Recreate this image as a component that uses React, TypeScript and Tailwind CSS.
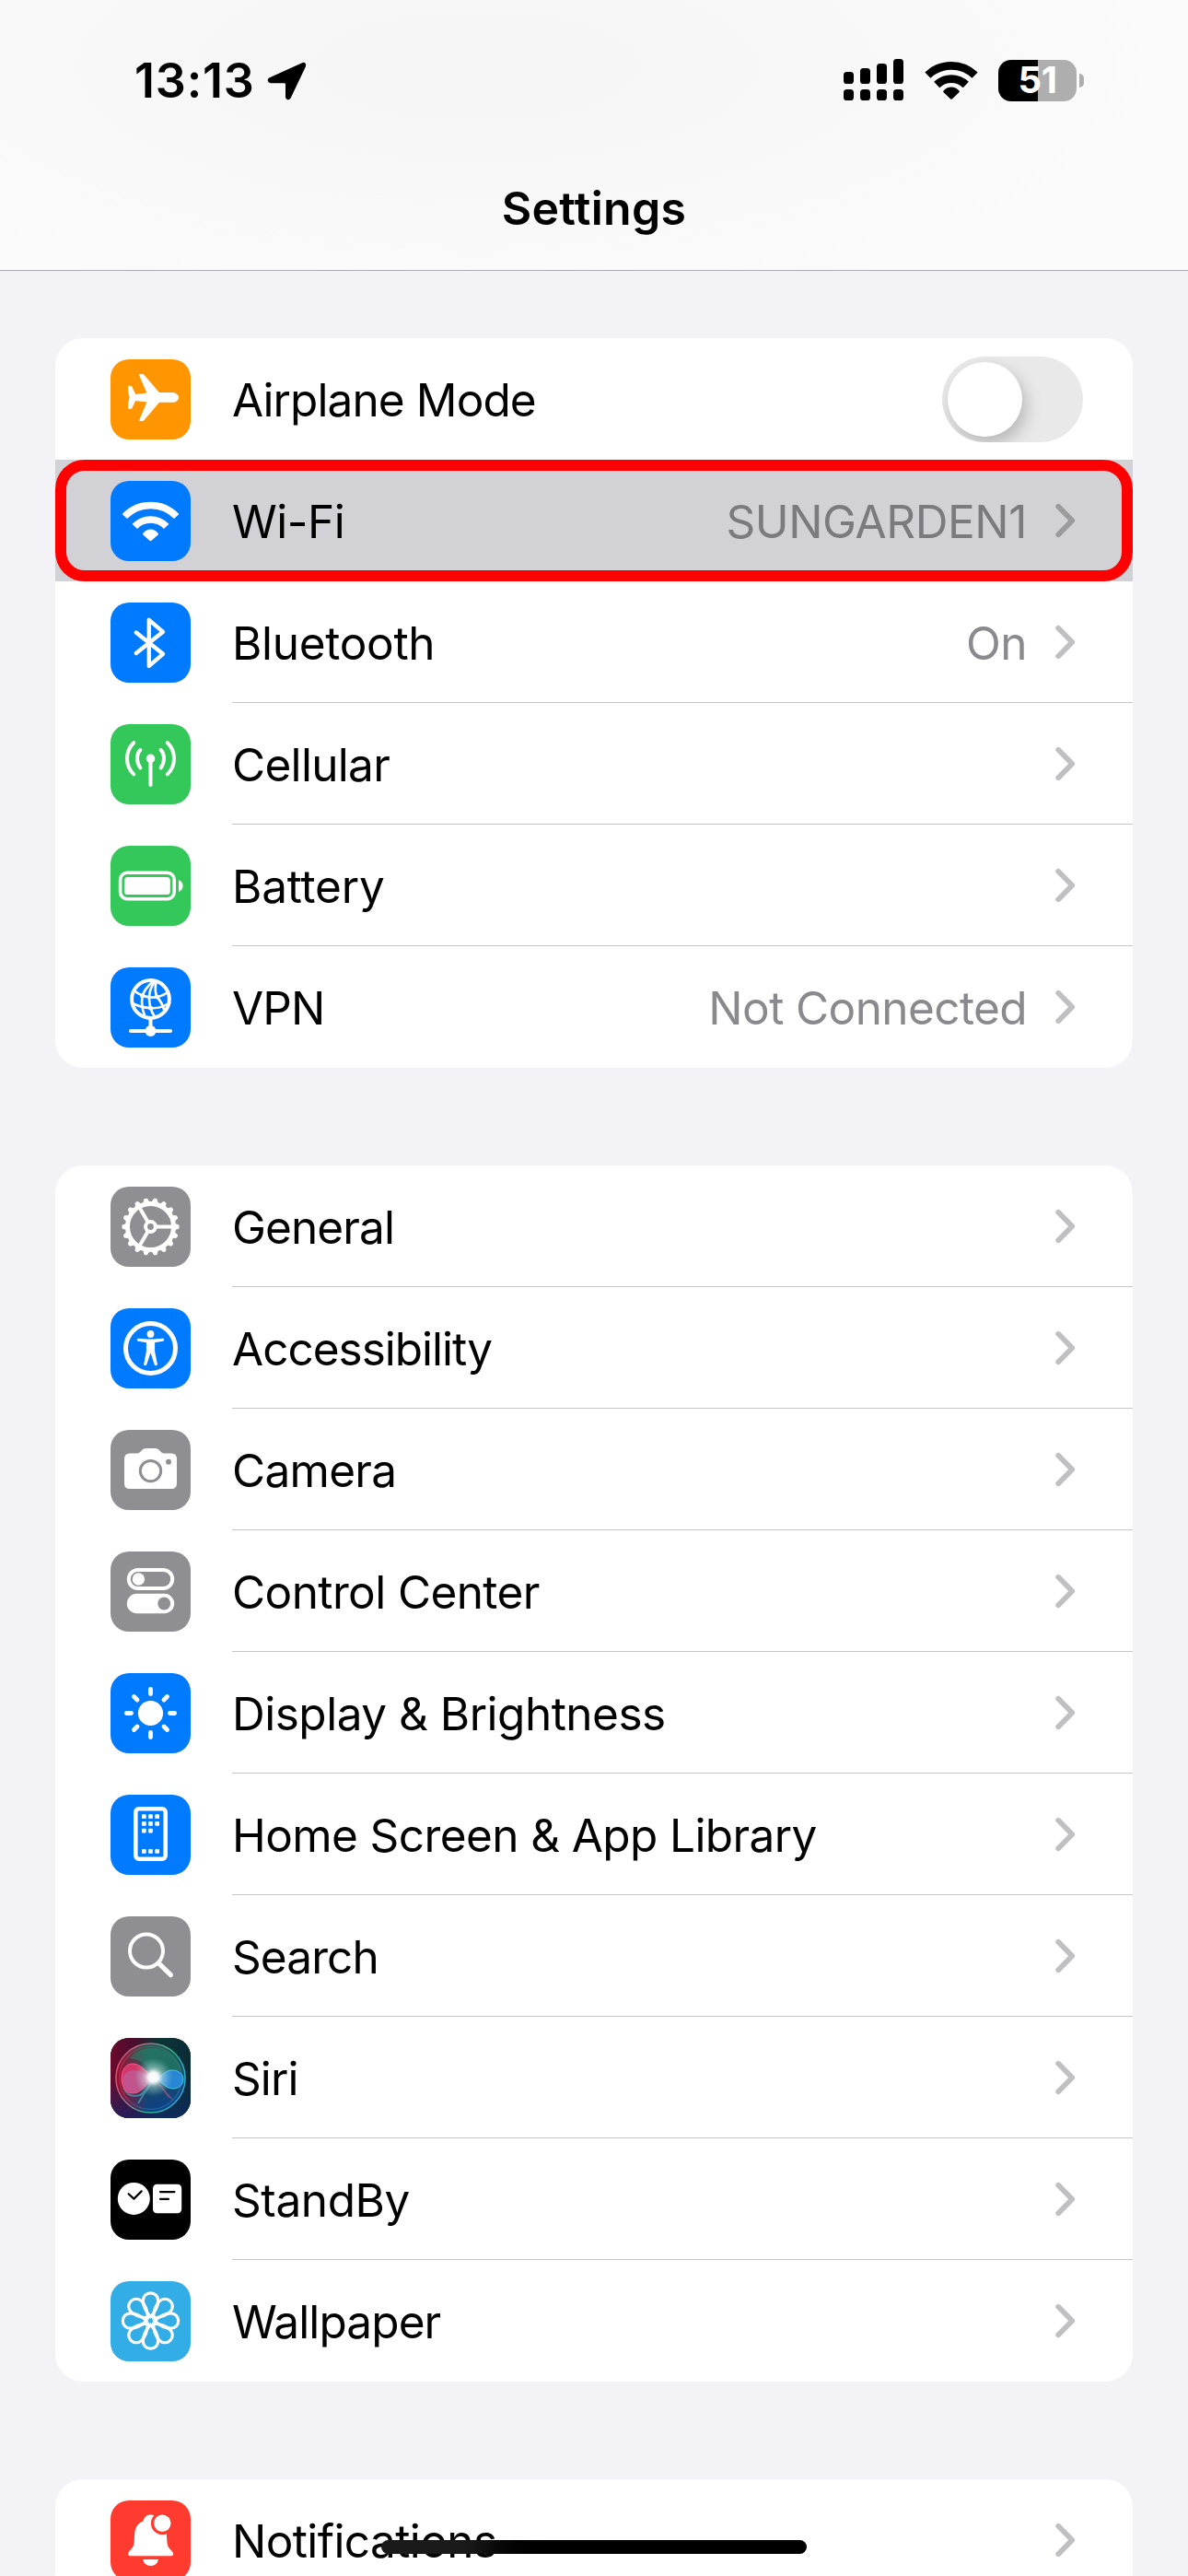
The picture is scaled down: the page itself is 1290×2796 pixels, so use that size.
import React from "react";

type Row = {
  label: string;
  color: string;
  icon: React.ReactNode;
  tracking?: string;
  value?: string;
  toggle?: boolean;
  active?: boolean;
};

const range = (n: number) => Array.from({ length: n }, (_, i) => i);

function Airplane() {
  return (
    <path
      fill="#fff"
      d="M31 16.6Q31 16 31.6 16H34.6Q35.8 16 36.6 17L53 36H67C71 36 74 38.6 74 41.4S71 46.8 67 46.8H53L36.6 66Q35.8 67 34.6 67H31.6Q31 67 31.2 66L39.4 46.4L27.2 45L23.2 53.2Q22.8 54 22 54H20Q19 54 19 53V48L20.7 41.4L19 35V29.5Q19 28.7 20 28.7H22Q22.8 28.7 23.2 29.5L27.2 38L39.4 36.4L31.2 17.4Z"
    />
  );
}

function Wifi() {
  return (
    <>
      <g fill="none" stroke="#fff" strokeWidth="7.4">
        <path d="M15.3 38.5A39 39 0 0 1 71.7 38.5" />
        <path d="M26.3 49.4A23.6 23.6 0 0 1 60.7 49.4" />
      </g>
      <path
        fill="#fff"
        d="M35.4 58.4Q34.4 57.4 35.6 56.4Q39 52.4 43.5 52.4T51.4 56.4Q52.6 57.4 51.6 58.4L44.5 64.8Q43.5 65.6 42.5 64.8Z"
      />
    </>
  );
}

function Bluetooth() {
  return (
    <path
      fill="none"
      stroke="#fff"
      strokeWidth="4.4"
      strokeLinecap="round"
      strokeLinejoin="round"
      d="M27.8 32.5L57 55.8L41.8 68.8V18.8L57 31.8L27.8 55"
    />
  );
}

function Cellular() {
  return (
    <>
      <g fill="none" stroke="#fff" strokeWidth="4" strokeLinecap="round">
        <path d="M25.2 20.2Q18 27 18 37.3T25.2 54.4" />
        <path d="M61.8 20.2Q69 27 69 37.3T61.8 54.4" />
        <path d="M32.4 28Q29 31.5 29 37.3T32.4 47.4" />
        <path d="M54.6 28Q58 31.5 58 37.3T54.6 47.4" />
        <path d="M43.5 38V66" />
      </g>
      <circle cx="43.5" cy="37.4" r="4.8" fill="#fff" />
    </>
  );
}

function BatteryIcon() {
  return (
    <>
      <rect x="10.6" y="29.3" width="58.6" height="28.4" rx="7.5" fill="none" stroke="#fff" strokeWidth="3.6" />
      <rect x="15" y="34" width="49.8" height="19" rx="3.6" fill="#fff" />
      <path fill="#fff" d="M74 37Q78.6 39 78.6 43.5T74 50Z" />
    </>
  );
}

function Vpn() {
  return (
    <>
      <g fill="none" stroke="#fff" strokeLinecap="round">
        <circle cx="43.5" cy="34.5" r="20.4" strokeWidth="4" />
        <g strokeWidth="2.7">
          <path d="M46 15.5Q37 23 34.5 31.5Q33 42 37 52" />
          <path d="M48 15.5Q42 24 42 33Q42 45 48 53.5" />
          <path d="M49.5 16Q47.5 26 50.5 32Q56 38 58.5 47" />
          <path d="M26 25.5Q34 32 44 32.5T62 27" />
          <path d="M23.8 39Q33 43.6 44 44.2T64 38.5" />
        </g>
        <path d="M43.5 55V68" strokeWidth="4" strokeLinecap="butt" />
        <path d="M22 69H65" strokeWidth="4" />
      </g>
      <g fill="#fff">
        <circle cx="34.5" cy="31" r="2.4" />
        <circle cx="50.4" cy="32" r="2.4" />
        <circle cx="43.5" cy="44.2" r="2.4" />
        <circle cx="43.5" cy="69" r="6" />
      </g>
    </>
  );
}

function Gear() {
  return (
    <>
      {range(18).map((i) => (
        <path
          key={i}
          fill="#fff"
          d="M69 39.5L74.2 41.6Q75.2 43.5 74.2 45.4L69 47.5Z"
          transform={`rotate(${i * 20} 43.5 43.5)`}
        />
      ))}
      <g fill="none" stroke="#fff">
        <circle cx="43.5" cy="43.5" r="25" strokeWidth="5" />
        <circle cx="43.5" cy="43.5" r="5.4" strokeWidth="4" />
        {[0, 120, 240].map((a) => (
          <path key={a} d="M50 43.5H68" strokeWidth="4" transform={`rotate(${a} 43.5 43.5)`} />
        ))}
      </g>
    </>
  );
}

function Accessibility() {
  return (
    <>
      <circle cx="43.5" cy="43.5" r="27" fill="none" stroke="#fff" strokeWidth="5" />
      <circle cx="43.5" cy="28" r="3.9" fill="#fff" />
      <path
        fill="#fff"
        stroke="#fff"
        strokeWidth="1.4"
        strokeLinejoin="round"
        d="M30 33.4L40 34.2H47L57 33.4Q58 34.2 57 35L47.4 36.6V47L50.2 61Q49.4 61.8 48.4 61L44.2 48H42.8L38.6 61Q37.6 61.8 36.8 61L39.6 47V36.6L30 35Q29 34.2 30 33.4Z"
      />
    </>
  );
}

function Camera() {
  return (
    <>
      <path
        fill="#fff"
        d="M21 25.5H29Q31 25.5 32.5 23.8L34.5 21.6Q36 20 38.5 20H48.5Q51 20 52.5 21.6L54.5 23.8Q56 25.5 58 25.5H66Q72 25.5 72 31.5V58Q72 64 66 64H21Q15 64 15 58V31.5Q15 25.5 21 25.5Z"
      />
      <circle cx="43.5" cy="44.6" r="11.2" fill="none" stroke="#8e8e93" strokeWidth="3" />
      <circle cx="63" cy="34.8" r="3" fill="#8e8e93" />
    </>
  );
}

function ControlCenter() {
  return (
    <>
      <rect x="19.8" y="20" width="47.4" height="20" rx="10" fill="none" stroke="#fff" strokeWidth="4" />
      <circle cx="30.4" cy="30" r="6.7" fill="#fff" />
      <rect x="17.8" y="45.8" width="51.4" height="21.4" rx="10.7" fill="#fff" />
      <circle cx="58.2" cy="56.5" r="6.9" fill="#8e8e93" />
    </>
  );
}

function Brightness() {
  return (
    <>
      <circle cx="43.5" cy="43.5" r="13.6" fill="#fff" />
      {range(8).map((i) => (
        <path
          key={i}
          d={i % 2 ? "M64 43.5H69" : "M64.5 43.5H69.6"}
          stroke="#fff"
          strokeWidth="4.8"
          strokeLinecap="round"
          transform={`rotate(${i * 45} 43.5 43.5)`}
        />
      ))}
    </>
  );
}

function HomeScreen() {
  const dots = [
    [34, 21.3], [41.1, 21.3], [48.3, 21.3],
    [34, 29.1], [41.1, 29.1], [48.3, 29.1],
    [34, 36.7], [41.1, 36.7],
    [34, 59], [41.1, 59], [48.3, 59],
  ];
  return (
    <>
      <rect x="27.3" y="15.3" width="32.4" height="54.4" rx="3.6" fill="none" stroke="#fff" strokeWidth="4.6" />
      {dots.map(([x, y]) => (
        <rect key={`${x}-${y}`} x={x} y={y} width="4.7" height="4.7" rx="0.8" fill="#fff" />
      ))}
    </>
  );
}

function SearchIcon() {
  return (
    <g fill="none" stroke="#fff">
      <circle cx="39" cy="37.5" r="18" strokeWidth="4" />
      <path d="M52.5 51L65.4 63.6" strokeWidth="5.2" strokeLinecap="round" />
    </g>
  );
}

function Siri() {
  return (
    <>
      <defs>
        <linearGradient id="siri-bg" x1="0" x2="1">
          <stop offset="0" stopColor="#6b0a2c" />
          <stop offset=".3" stopColor="#4a0d2e" />
          <stop offset=".6" stopColor="#0d3536" />
          <stop offset="1" stopColor="#0a2c38" />
        </linearGradient>
        <linearGradient id="siri-low" x1="0" y1="0" x2="0" y2="1">
          <stop offset=".5" stopColor="#0b2b66" stopOpacity="0" />
          <stop offset="1" stopColor="#10276e" stopOpacity=".7" />
        </linearGradient>
        <linearGradient id="siri-ring" x1="0" y1=".3" x2="1" y2=".7">
          <stop offset="0" stopColor="#e0506e" />
          <stop offset=".35" stopColor="#8a8090" />
          <stop offset=".65" stopColor="#25b98e" />
          <stop offset="1" stopColor="#35a8e8" />
        </linearGradient>
        <linearGradient id="siri-orb" x1=".3" y1="0" x2=".6" y2="1">
          <stop offset="0" stopColor="#2a5f54" />
          <stop offset=".5" stopColor="#1f4f58" />
          <stop offset="1" stopColor="#0c3f8c" />
        </linearGradient>
        <linearGradient id="siri-red" x1="0" x2="1">
          <stop offset="0" stopColor="#b3002f" stopOpacity=".9" />
          <stop offset=".45" stopColor="#a3002f" stopOpacity="0" />
        </linearGradient>
        <radialGradient id="siri-glow">
          <stop offset="0" stopColor="#fff" />
          <stop offset=".25" stopColor="#fff" stopOpacity=".95" />
          <stop offset=".5" stopColor="#d8f5f2" stopOpacity=".45" />
          <stop offset="1" stopColor="#9fe0e0" stopOpacity="0" />
        </radialGradient>
      </defs>
      <rect width="87" height="87" fill="url(#siri-bg)" />
      <rect width="87" height="87" fill="url(#siri-low)" />
      <circle cx="43.5" cy="43.5" r="37" fill="url(#siri-orb)" />
      <circle cx="43.5" cy="43.5" r="37" fill="url(#siri-red)" />
      <path fill="#1fa27a" fillOpacity=".35" d="M20 22Q30 10 48 11Q70 14 77 36Q64 34 47 43Q40 24 20 22Z" />
      <path
        fill="none"
        stroke="#4cb0c8"
        strokeOpacity=".6"
        strokeWidth="2"
        d="M14 54Q20 66 32 62Q40 58 47 43L30 71"
      />
      <path
        fill="#e0386f"
        fillOpacity=".9"
        stroke="#ff5c8d"
        strokeWidth="1"
        d="M47 43C38 36 32 28 24 28C17 28 12 34 12 44C12 54 17 60 25 60C33 60 40 50 47 43Z"
      />
      <path
        fill="#b070b0"
        fillOpacity=".5"
        d="M47 43C38 40 32 35 25 35C18 35 13 40 13 46C13 54 18 59 25 59C33 59 40 50 47 43Z"
      />
      <path
        fill="#2a8de0"
        fillOpacity=".9"
        stroke="#43c8e8"
        strokeWidth="1"
        d="M50 44C57 40 60 35 67 35C74 35 79 39 79 45C79 51 74 55 68 55C61 55 56 49 50 44Z"
      />
      <path fill="#c65c86" fillOpacity=".55" d="M48 44L69 68L62 64Z" />
      <circle cx="46.7" cy="42.6" r="21" fill="url(#siri-glow)" />
      <circle cx="43.5" cy="43.5" r="37.6" fill="none" stroke="url(#siri-ring)" strokeWidth="1.5" />
      <circle cx="43.5" cy="43.5" r="34" fill="none" stroke="url(#siri-ring)" strokeOpacity=".35" strokeWidth="1.2" />
    </>
  );
}

function StandBy() {
  return (
    <>
      <circle cx="25.3" cy="42.4" r="17.5" fill="#fff" />
      <rect x="46" y="26.8" width="31.2" height="31.4" rx="4.4" fill="#fff" />
      <g fill="none" stroke="#000" strokeWidth="2.2" strokeLinecap="round" strokeLinejoin="round">
        <path d="M19.6 37.2L25.4 42.6L33.6 34.4" />
        <path d="M54 35.1H69.4M54 42.8H63" />
      </g>
    </>
  );
}

function Wallpaper() {
  return (
    <g fill="none" stroke="#fff" strokeWidth="3.2">
      {range(8).map((i) => (
        <path
          key={i}
          d="M43.5 38.6C39.6 34.5 35.3 27.5 35.3 21A8.2 8.2 0 0 1 51.7 21C51.7 27.5 47.4 34.5 43.5 38.6Z"
          transform={`rotate(${i * 45} 43.5 43)`}
        />
      ))}
      <circle cx="43.5" cy="43" r="5.2" strokeWidth="2.6" />
    </g>
  );
}

function Bell() {
  return (
    <>
      <path
        fill="#fff"
        d="M19 58.5C19 54 25.6 52.5 25.6 45L26.2 36C26.6 29 30 24.5 35.5 22.5C36.5 18 39.5 15.6 43.5 15.6S50.5 18 51.5 22.5C57 24.5 60.6 29 60.8 36L61.4 45C61.4 52.5 68.2 54 68.2 58.5Q68.2 60.3 65.6 60.3H21.6Q19 60.3 19 58.5Z"
      />
      <circle cx="56.3" cy="24.7" r="12.4" fill="#ff3b30" />
      <circle cx="56.3" cy="24.7" r="9.2" fill="#fff" />
      <path fill="#fff" d="M35.2 64H52Q50.5 71 43.6 71T35.2 64Z" />
    </>
  );
}

const groups: Row[][] = [
  [
    { label: "Airplane Mode", color: "bg-[#ff9500]", icon: <Airplane />, toggle: true },
    { label: "Wi-Fi", color: "bg-[#007aff]", icon: <Wifi />, tracking: "tracking-[-0.5px]", value: "SUNGARDEN1", active: true },
    { label: "Bluetooth", color: "bg-[#007aff]", icon: <Bluetooth />, tracking: "tracking-[-0.3px]", value: "On" },
    { label: "Cellular", color: "bg-[#34c759]", icon: <Cellular />, tracking: "tracking-[-0.7px]" },
    { label: "Battery", color: "bg-[#34c759]", icon: <BatteryIcon />, tracking: "tracking-[-0.2px]" },
    { label: "VPN", color: "bg-[#007aff]", icon: <Vpn />, value: "Not Connected" },
  ],
  [
    { label: "General", color: "bg-[#8e8e93]", icon: <Gear /> },
    { label: "Accessibility", color: "bg-[#007aff]", icon: <Accessibility />, tracking: "tracking-[-1px]" },
    { label: "Camera", color: "bg-[#8e8e93]", icon: <Camera />, tracking: "tracking-[-0.7px]" },
    { label: "Control Center", color: "bg-[#8e8e93]", icon: <ControlCenter />, tracking: "tracking-[-0.6px]" },
    { label: "Display & Brightness", color: "bg-[#007aff]", icon: <Brightness />, tracking: "tracking-[-0.5px]" },
    { label: "Home Screen & App Library", color: "bg-[#007aff]", icon: <HomeScreen />, tracking: "tracking-[-0.6px]" },
    { label: "Search", color: "bg-[#8e8e93]", icon: <SearchIcon /> },
    { label: "Siri", color: "bg-black", icon: <Siri /> },
    { label: "StandBy", color: "bg-black", icon: <StandBy />, tracking: "tracking-[-0.4px]" },
    { label: "Wallpaper", color: "bg-[#32ade6]", icon: <Wallpaper /> },
  ],
  [{ label: "Notifications", color: "bg-[#ff3b30]", icon: <Bell />, tracking: "tracking-[-0.6px]" }],
];

function StatusBar() {
  return (
    <div className="flex h-[174px] items-center justify-between pr-[113px] pl-[146px]">
      <div className="flex items-center gap-[13px] pt-[2px]">
        <span className="text-[52px] leading-none font-semibold tracking-[0.8px]">13:13</span>
        <svg className="h-[42px] w-[43px]" viewBox="0 0 43 42">
          <path
            d="M37.5 1.4Q40 0.2 41.4 1.6T41.8 5.6L25.6 39.4Q24.6 41.4 22.4 41.2T20 38.6V24.6Q20 23.2 18.6 23.2H4Q1.4 23.2 0.8 20.8T2.8 17.2Z"
          />
        </svg>
      </div>
      <div className="flex items-center">
        <svg className="h-[46px] w-[65px]" viewBox="0 0 65 46">
          {[14, 10, 5, 0].map((y, i) => (
            <g key={y}>
              <rect x={i * 18} y={y} width="11" height={27 - y} rx="3.6" />
              <rect x={i * 18} y="33" width="11" height="12" rx="3.6" />
            </g>
          ))}
        </svg>
        <svg className="ml-[23px] h-[44px] w-[58px]" viewBox="0 0 58 44">
          <g fill="none" stroke="#000" strokeWidth="8.8">
            <path d="M3.4 16.6A37 37 0 0 1 54.6 16.6" />
            <path d="M13.2 27A22.6 22.6 0 0 1 44.8 27" />
          </g>
          <path d="M20.6 33.4Q24 29.6 29 29.6T37.4 33.4Q38.4 34.2 37.4 35.2L29.8 42.4Q29 43 28.2 42.4L20.6 35.2Q19.6 34.2 20.6 33.4Z" />
        </svg>
        <div className="ml-[22px] flex items-center gap-[3px]">
          <div className="flex h-[45px] w-[85px] items-center justify-center rounded-[14px] bg-linear-to-r from-black from-[51%] to-[#aeaeae] to-[51%]">
            <span className="text-[40px] leading-none font-bold tracking-[-0.4px] text-white">51</span>
          </div>
          <div className="h-[15px] w-[5px] rounded-r-full bg-[#aeaeae]" />
        </div>
      </div>
    </div>
  );
}

function Chevron({ active }: { active?: boolean }) {
  return (
    <svg className="ml-[31px] h-[38px] w-[22px]" viewBox="0 0 22 38">
      <path
        d="M3.2 3.8L18.2 19L3.2 34.2"
        fill="none"
        stroke={active ? "#9b9b9e" : "#c0c0c2"}
        strokeWidth="5.8"
        strokeLinecap="round"
        strokeLinejoin="round"
      />
    </svg>
  );
}

function Toggle() {
  return (
    <div className="h-[93px] w-[153px] overflow-hidden rounded-full bg-[#e9e9ea] p-[6px]">
      <div className="size-[81px] rounded-full bg-white shadow-[4px_8px_18px_rgba(0,0,0,0.22)]" />
    </div>
  );
}

function SettingsRow({ row, line }: { row: Row; line: boolean }) {
  return (
    <div className={`relative flex h-[132px] items-center pl-[60px] ${row.active ? "bg-[#d1d1d6]" : ""}`}>
      <div className={`size-[87px] shrink-0 overflow-hidden rounded-[20px] ${row.color}`}>
        <svg className="size-[87px]" viewBox="0 0 87 87">
          {row.icon}
        </svg>
      </div>
      <div
        className={`ml-[45px] flex h-full flex-1 items-center justify-between border-b pt-[1px] ${
          row.toggle ? "pr-[54px]" : "pr-[62px]"
        } ${line ? "border-[#c6c6c8]" : "border-transparent"}`}
      >
        <span className={`pt-[2px] ${row.tracking ?? "tracking-[-0.9px]"}`}>{row.label}</span>
        {row.toggle ? (
          <Toggle />
        ) : (
          <div className="flex items-center">
            {row.value && (
              <span
                className={`pt-[2px] ${
                  row.active ? "tracking-[-0.4px] text-[#7a7a7f]" : "tracking-[-0.6px] text-[#8a8a8e]"
                }`}
              >
                {row.value}
              </span>
            )}
            <Chevron active={row.active} />
          </div>
        )}
      </div>
      {row.active && (
        <div className="absolute inset-0 rounded-[32px] border-[12px] border-[#ff0000]" />
      )}
    </div>
  );
}

export default function App() {
  return (
    <div className="relative h-[2796px] w-[1290px] overflow-hidden bg-[#f2f2f7] font-['Inter',sans-serif] text-black">
      <header className="h-[294px] border-b border-[#adadb0] bg-[radial-gradient(ellipse_60%_90%_at_40%_25%,#f5f5f5,#fbfbfc)]">
        <StatusBar />
        <h1 className="mt-[22px] text-center text-[50px] leading-[60px] font-semibold tracking-[0.3px]">
          Settings
        </h1>
      </header>

      <main className="flex flex-col gap-[106px] px-[60px] pt-[73px]">
        {groups.map((rows, g) => (
          <section key={g} className="overflow-hidden rounded-[30px] bg-white text-[49.5px] leading-[60px]">
            {rows.map((row, i) => (
              <SettingsRow
                key={row.label}
                row={row}
                line={i < rows.length - 1 && !row.toggle && !row.active}
              />
            ))}
          </section>
        ))}
      </main>

      {/* home indicator */}
      <div className="absolute bottom-[24px] left-[414px] h-[15px] w-[462px] rounded-full bg-linear-to-r from-[#1a1a1a] from-20% to-black to-40%" />
    </div>
  );
}
